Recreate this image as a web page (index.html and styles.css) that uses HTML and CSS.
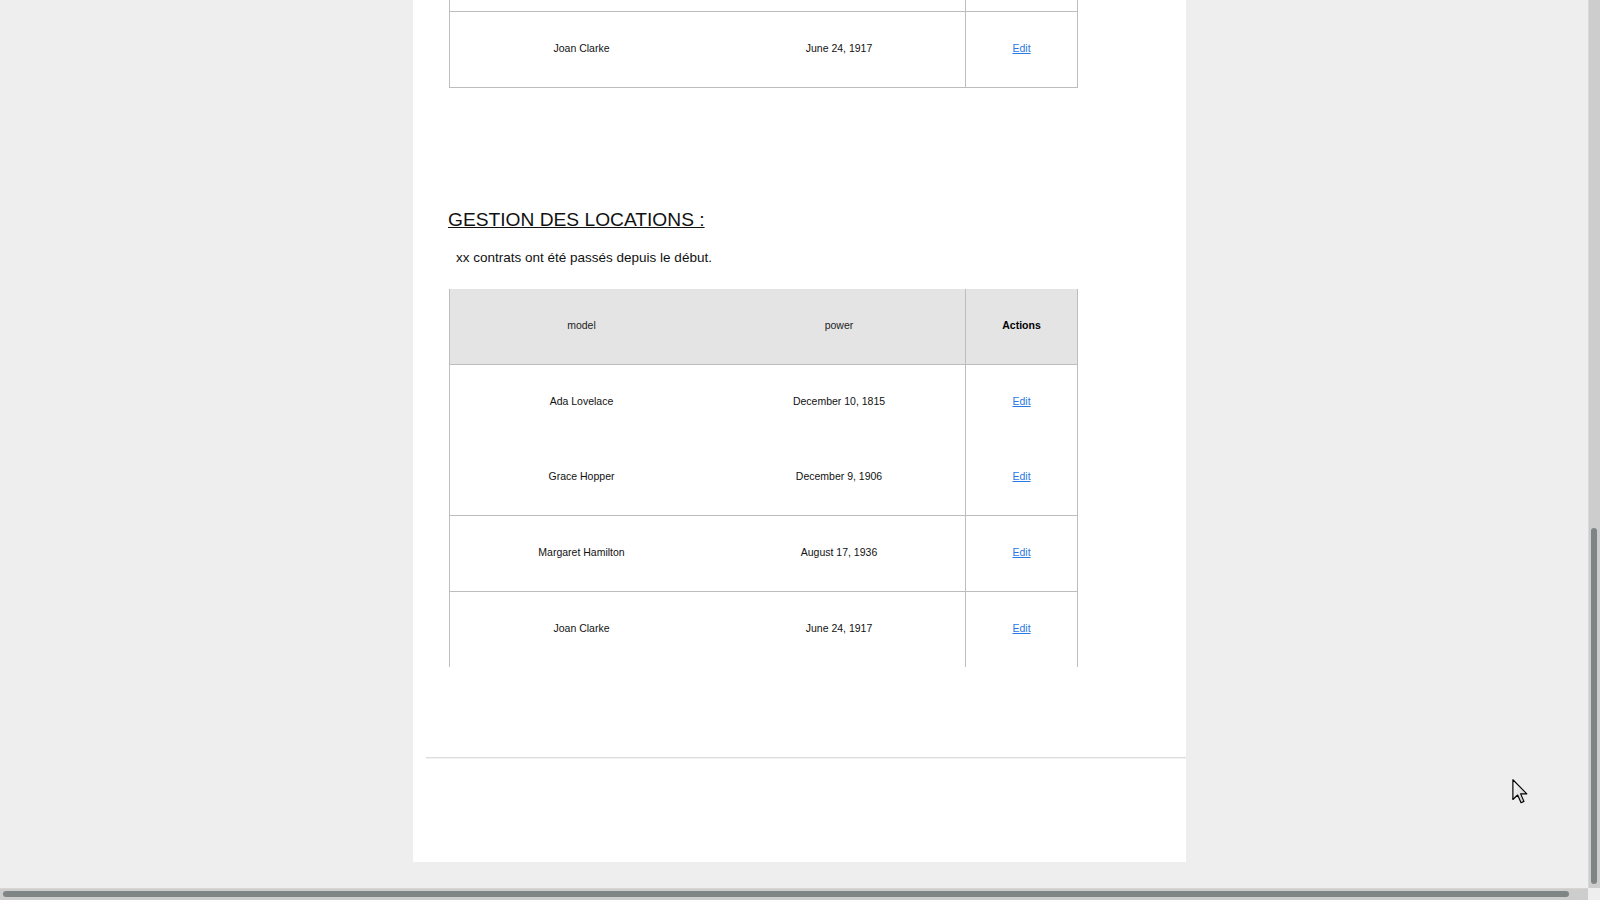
FILE: index.html
```html
<!DOCTYPE html>
<html lang="fr">
<head>
<meta charset="utf-8">
<title>Gestion des locations</title>
<link rel="stylesheet" href="styles.css">
</head>
<body>
<div class="screen">
  <div class="viewport">
    <main class="page">
      <div class="tbl closed">
        <div class="c cut"></div><div class="c cut"></div><div class="c cut act"></div>
        <div class="c sep">Joan Clarke</div><div class="c sep">June 24, 1917</div><div class="c sep act"><a href="#">Edit</a></div>
      </div>

      <h3 class="title">GESTION DES LOCATIONS :</h3>
      <p class="count">xx contrats ont été passés depuis le début.</p>

      <div class="tbl">
        <div class="c head">model</div><div class="c head">power</div><div class="c head act strong">Actions</div>
        <div class="c sep">Ada Lovelace</div><div class="c sep">December 10, 1815</div><div class="c sep act"><a href="#">Edit</a></div>
        <div class="c">Grace Hopper</div><div class="c">December 9, 1906</div><div class="c act"><a href="#">Edit</a></div>
        <div class="c sep">Margaret Hamilton</div><div class="c sep">August 17, 1936</div><div class="c sep act"><a href="#">Edit</a></div>
        <div class="c sep">Joan Clarke</div><div class="c sep">June 24, 1917</div><div class="c sep act"><a href="#">Edit</a></div>
      </div>

      <div class="rule"></div>
    </main>
  </div>
  <div class="vtrack"><div class="vthumb"></div></div>
  <div class="htrack"><div class="hthumb"></div></div>
  <div class="corner"></div>
</div>
<svg class="cursor" width="16" height="25" viewBox="0 0 12 19" aria-hidden="true">
  <defs>
    <linearGradient id="cg" x1="0" y1="0" x2="1" y2="1">
      <stop offset="0" stop-color="#ffffff"/>
      <stop offset="1" stop-color="#c8c8c8"/>
    </linearGradient>
  </defs>
  <path d="M0.6 0.6 L0.6 15.6 L4.2 12.2 L6.8 18 L9 17 L6.5 11.3 L11.2 11.3 Z" fill="url(#cg)" stroke="#000" stroke-width="0.9" stroke-linejoin="round"/>
</svg>
</body>
</html>
```

FILE: styles.css
```css
html, body {
  margin: 0;
  padding: 0;
}

body {
  width: 1600px;
  height: 900px;
  overflow: hidden;
  background: #eeeeee;
  font-family: "Liberation Sans", Arial, Helvetica, sans-serif;
  color: #111;
}

.screen {
  display: grid;
  grid-template-columns: 1588px 12px;
  grid-template-rows: 888px 12px;
  width: 1600px;
  height: 900px;
}

.viewport {
  overflow: hidden;
  background: #eeeeee;
}

.page {
  display: block;
  margin-left: 413px;
  width: 773px;
  background: #ffffff;
  padding-bottom: 103px;
}

.tbl {
  display: grid;
  grid-template-columns: 263px 252px 112px;
  width: max-content;
  margin-left: 36px;
  border-left: 1px solid #bdbdbd;
  border-right: 1px solid #bdbdbd;
  font-size: 10.5px;
}

.tbl.closed {
  border-bottom: 1px solid #bdbdbd;
}

.page > .tbl + .title {
  margin-top: 121px;
}

.c {
  box-sizing: border-box;
  line-height: 73px;
  height: 75px;
  text-align: center;
  white-space: nowrap;
  color: #111;
}

.c.cut {
  height: 11px;
  line-height: 11px;
}

.c.sep {
  height: 76px;
  border-top: 1px solid #bdbdbd;
}

.c.act {
  border-left: 1px solid #bdbdbd;
}

.c.head {
  background: #e4e4e4;
  color: #222;
}

.c.strong {
  font-weight: bold;
  color: #000;
}

.c a {
  color: #2a78e4;
  text-decoration: underline;
}

.title {
  margin: 0 0 0 35px;
  font-size: 19.2px;
  line-height: 22px;
  font-weight: normal;
  text-decoration: underline;
  text-decoration-thickness: 1px;
  color: #111;
}

.count {
  margin: 19px 0 24px 43px;
  font-size: 13.5px;
  line-height: 15px;
  color: #111;
}

.rule {
  margin: 90px 0 0 13px;
  border-top: 1px solid #dddddd;
  border-bottom: 1px solid #f1f1f1;
}

.vtrack {
  box-sizing: border-box;
  background: #cdcdcd;
  border-left: 1px solid #d9d9d9;
  padding: 528px 3px 4px 2px;
}

.vthumb {
  height: 100%;
  background: #7f8484;
  border-radius: 3px;
}

.htrack {
  box-sizing: border-box;
  background: #cdcdcd;
  border-top: 1px solid #d8d4d0;
  padding: 2px 19px 3px 3px;
}

.hthumb {
  height: 100%;
  background: #7f8484;
  border-radius: 3px;
}

.corner {
  background: #eeeeee;
}

.cursor {
  position: absolute;
  left: 1512px;
  top: 779px;
}
```
